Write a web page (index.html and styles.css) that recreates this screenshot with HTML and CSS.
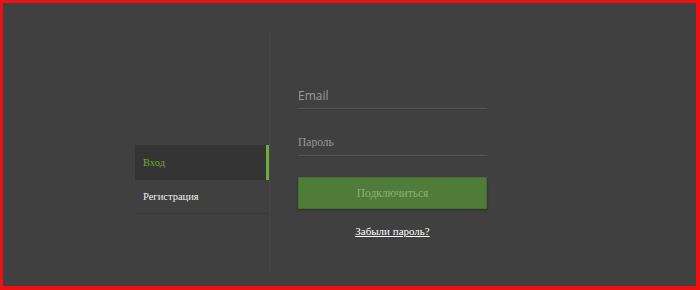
FILE: index.html
```html
<!DOCTYPE html>
<html lang="ru">
<head>
  <meta charset="UTF-8">
  <meta name="viewport" content="width=device-width, initial-scale=1.0">
  <title>Вход</title>
  <link rel="stylesheet" href="styles.css">
</head>
<body>
  <div class="frame">
    <div class="panel">
      <nav class="tabs">
        <a class="tab active" href="#">Вход</a>
        <a class="tab" href="#">Регистрация</a>
      </nav>
      <form class="login">
        <input class="field sans" type="text" placeholder="Email">
        <input class="field serif" type="password" placeholder="Пароль">
        <button class="submit" type="button">Подключиться</button>
        <a class="forgot" href="#">Забыли пароль?</a>
      </form>
    </div>
  </div>
</body>
</html>
```

FILE: styles.css
```css
:root {
  --bg: #404040;
  --tab-active: #343434;
  --green: #6cab3c;
  --line: #555;
  --red: #ee1111;
}
html, body {
  margin: 0;
  padding: 0;
}
body {
  background: var(--bg);
  font-family: 'Liberation Serif', serif;
}
.frame {
  width: 700px;
  height: 290px;
  box-sizing: border-box;
  border: 3px solid var(--red);
  border-right-width: 4px;
  border-bottom-width: 4px;
  background: var(--bg);
}
.panel {
  display: flex;
  margin-left: 132px;
  padding-top: 27px;
}
.tabs {
  width: 135px;
  height: 243px;
  border-right: 1px solid #474747;
  display: flex;
  flex-direction: column;
  padding-top: 115px;
  box-sizing: border-box;
}
.tab {
  display: block;
  height: 33px;
  line-height: 33px;
  padding-left: 8px;
  font-size: 10.5px;
  color: #f2f2f2;
  text-decoration: none;
  border-bottom: 1px solid #3a3a3a;
}
.tab.active {
  height: 35px;
  line-height: 35px;
  background: var(--tab-active);
  color: var(--green);
  border-bottom: none;
  box-shadow: inset -3px 0 0 var(--green);
}
.login {
  width: 189px;
  margin-left: 28px;
  padding-top: 58px;
  display: flex;
  flex-direction: column;
}
.field {
  height: 21px;
  padding: 0 0 6px;
  margin: 0;
  box-sizing: border-box;
  background: transparent;
  border: none;
  border-bottom: 1px solid var(--line);
  box-shadow: 0 1px 0 #3a3a3a;
  color: #bbb;
  outline: none;
}
.field::placeholder {
  color: #9a9a9a;
}
.field.sans {
  font-family: 'Open Sans', sans-serif;
  font-size: 12px;
}
.field.serif {
  margin-top: 26px;
  font-family: 'Liberation Serif', serif;
  font-size: 11.5px;
}
.submit {
  margin-top: 21px;
  height: 32px;
  background: #4f7d39;
  border: 1px solid #456d32;
  color: #8eae7e;
  font-family: 'Liberation Serif', serif;
  font-size: 11.5px;
  box-shadow: 0 1px 2px rgba(0,0,0,0.3);
}
.forgot {
  align-self: center;
  margin-top: 16px;
  color: #fff;
  font-size: 11px;
  text-decoration: underline;
}
```
